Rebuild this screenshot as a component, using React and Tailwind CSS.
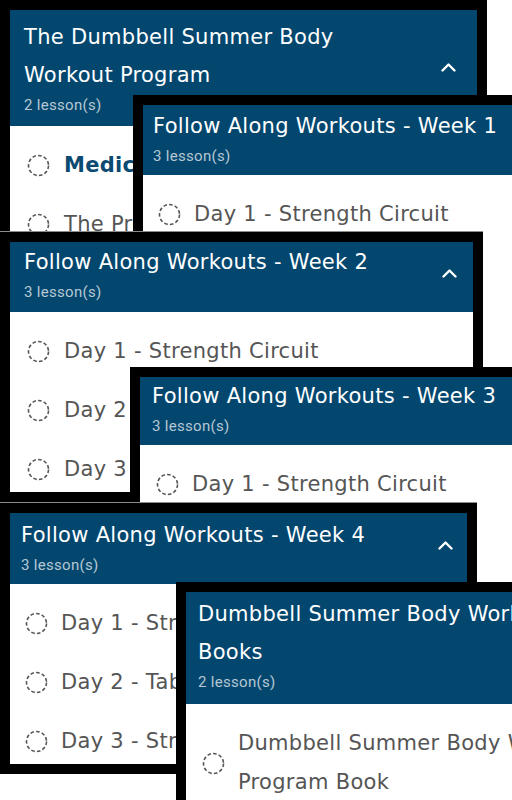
import React from "react";

const TITLE_FONT = { fontFamily: '"DejaVu Sans", sans-serif' };
const SMALL_FONT = { fontFamily: 'Roboto, "Liberation Sans", sans-serif' };

function DashedCircle() {
  return (
    <svg width="23" height="23" viewBox="0 0 23 23" className="shrink-0">
      <circle cx="11.5" cy="11.5" r="10" fill="none" stroke="#555555" strokeWidth="1.6" strokeDasharray="3.6 2.2" />
    </svg>
  );
}

function Chevron({ className }) {
  return (
    <svg width="15" height="9" viewBox="0 0 15 9" className={"absolute " + className}>
      <polyline points="1.5,7.5 7.5,1.5 13.5,7.5" fill="none" stroke="white" strokeWidth="2.4" strokeLinecap="round" strokeLinejoin="round" />
    </svg>
  );
}

function Item({ lines, active, pad }) {
  return (
    <div className={"flex items-center h-[59px] whitespace-nowrap " + (pad || "pl-[17px] gap-[14px]")}>
      <DashedCircle />
      <div>
        {lines.map((l, i) => (
          <div
            key={i}
            className={
              "text-[21px] leading-[39px] tracking-[0.3px] " +
              (active ? "text-[#0b4a72] font-semibold" : "text-[#555555]")
            }
            style={TITLE_FONT}
          >
            {l}
          </div>
        ))}
      </div>
    </div>
  );
}

function Card({ frame, header, titles, count, chevron, body, children, topLine }) {
  return (
    <div
      className={
        "absolute box-border border-[10px] border-black bg-white overflow-hidden " +
        frame +
        (topLine ? " shadow-[0_-1px_0_#8c8c8c]" : "")
      }
    >
      <div className={"relative bg-[#03476f] " + header}>
        {titles.map((t, i) => (
          <div key={i} className="text-white text-[21px] leading-[38px] tracking-[0.3px] whitespace-nowrap" style={TITLE_FONT}>
            {t}
          </div>
        ))}
        <div className="text-[#b6c7d4] text-[15px] leading-[22px] tracking-[0.3px]" style={SMALL_FONT}>
          {count}
        </div>
        {chevron ? <Chevron className={chevron} /> : null}
      </div>
      <div className={body}>{children}</div>
    </div>
  );
}

export default function App() {
  return (
    <div className="relative w-[512px] h-[800px] overflow-hidden bg-white">
      <Card
        frame="left-0 top-0 w-[487px] h-[241px]"
        header="pl-[14px] pt-[8px] pb-[10px]"
        titles={["The Dumbbell Summer Body", "Workout Program"]}
        count="2 lesson(s)"
        chevron="right-[21px] top-[53px]"
        body="pt-[10px]"
      >
        <Item lines={["Medical Disclaimer"]} active />
        <Item lines={["The Program Overview"]} />
      </Card>

      <Card
        frame="left-[133px] top-[95px] w-[420px] h-[300px]"
        header="pl-[10px] pt-[2px] pb-[8px]"
        titles={["Follow Along Workouts - Week 1"]}
        count="3 lesson(s)"
        body="pt-[10px]"
      >
        <Item lines={["Day 1 - Strength Circuit"]} pad="pl-[15px] gap-[13px]" />
        <Item lines={["Day 2 - Tabata Cardio"]} pad="pl-[15px] gap-[13px]" />
        <Item lines={["Day 3 - Strength Circuit"]} pad="pl-[15px] gap-[13px]" />
      </Card>

      <Card
        frame="left-0 top-[232px] w-[483px] h-[270px]"
        header="pl-[14px] pt-[1px] pb-[9px]"
        titles={["Follow Along Workouts - Week 2"]}
        count="3 lesson(s)"
        chevron="right-[16px] top-[27px]"
        body="pt-[10px]"
        topLine
      >
        <Item lines={["Day 1 - Strength Circuit"]} />
        <Item lines={["Day 2 - Tabata Cardio"]} />
        <Item lines={["Day 3 - Strength Circuit"]} />
      </Card>

      <Card
        frame="left-[130px] top-[367px] w-[420px] h-[233px]"
        header="pl-[12px] pt-0 pb-[8px]"
        titles={["Follow Along Workouts - Week 3"]}
        count="3 lesson(s)"
        body="pt-[10px]"
      >
        <Item lines={["Day 1 - Strength Circuit"]} pad="pl-[16px] gap-[13px]" />
        <Item lines={["Day 2 - Tabata Cardio"]} pad="pl-[16px] gap-[13px]" />
      </Card>

      <Card
        frame="left-0 top-[503px] w-[477px] h-[271px]"
        header="pl-[11px] pt-[3px] pb-[8px]"
        titles={["Follow Along Workouts - Week 4"]}
        count="3 lesson(s)"
        chevron="right-[14px] top-[28px]"
        body="pt-[10px]"
        topLine
      >
        <Item lines={["Day 1 - Strength Circuit"]} pad="pl-[15px] gap-[13px]" />
        <Item lines={["Day 2 - Tabata Cardio"]} pad="pl-[15px] gap-[13px]" />
        <Item lines={["Day 3 - Strength Circuit"]} pad="pl-[15px] gap-[13px]" />
      </Card>

      <Card
        frame="left-[176px] top-[582px] w-[420px] h-[300px]"
        header="pl-[12px] pt-[3px] pb-[11px]"
        titles={["Dumbbell Summer Body Workout Program", "Books"]}
        count="2 lesson(s)"
        body="pt-[20px]"
      >
        <div className="flex items-center pl-[16px] gap-[13px] whitespace-nowrap">
          <DashedCircle />
          <div>
            <div className="text-[21px] leading-[39px] tracking-[0.3px] text-[#555555]" style={TITLE_FONT}>
              Dumbbell Summer Body Workout
            </div>
            <div className="text-[21px] leading-[39px] tracking-[0.3px] text-[#555555]" style={TITLE_FONT}>
              Program Book
            </div>
          </div>
        </div>
      </Card>
    </div>
  );
}
